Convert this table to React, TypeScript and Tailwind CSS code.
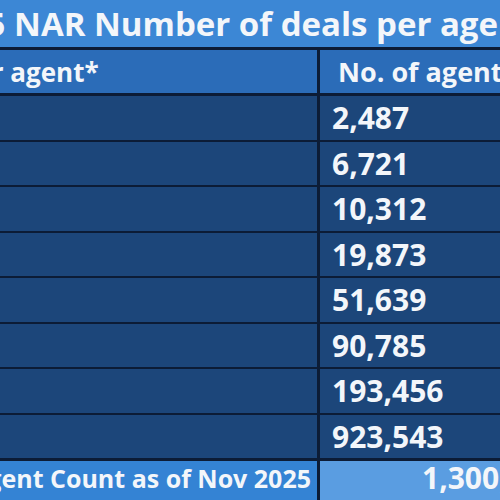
import React from "react";

const ROWS = ["2,487", "6,721", "10,312", "19,873", "51,639", "90,785", "193,456", "923,543"];

export default function App() {
  return (
    <div
      className="h-[500px] w-[500px] overflow-hidden bg-[#0c1c36] leading-none text-[#f3f6fa]"
      style={{ fontFamily: '"Open Sans", "Noto Sans", sans-serif' }}
    >
      <div className="ml-[-160px] flex w-[760px] flex-col">
        {/* title */}
        <div className="flex h-[47px] items-center bg-[#3c87d5] pl-[90px] text-[33px] leading-none font-bold whitespace-nowrap">
          2025 NAR Number of deals per agent
        </div>

        {/* header */}
        <div className="mt-[3px] grid h-[43px] grid-cols-[477px_1fr] grid-rows-[43px] gap-x-[3px]">
          <div className="flex items-center bg-[#2b6cb8] pl-[42px] text-[26px] leading-none font-bold whitespace-nowrap">
            Deals per agent*
          </div>
          <div className="flex items-center bg-[#2b6cb8] pl-[18px] text-[27px] leading-none font-bold whitespace-nowrap">
            No. of agents
          </div>
        </div>

        {/* rows */}
        <div className="mt-[3px] flex flex-col gap-y-[2px]">
          {ROWS.map((n, i) => (
            <div
              key={n}
              className={
                i % 2 === 0
                  ? "grid h-[44px] grid-cols-[477px_1fr] grid-rows-[44px] gap-x-[3px]"
                  : "grid h-[43px] grid-cols-[477px_1fr] grid-rows-[43px] gap-x-[3px]"
              }
            >
              <div className="bg-[#1c467a]" />
              <div className="flex items-center bg-[#1c467a] pl-[12px] text-[30px] leading-none font-bold">
                {n}
              </div>
            </div>
          ))}
        </div>

        {/* footer */}
        <div className="mt-[3px] grid h-[44px] grid-cols-[477px_1fr] grid-rows-[44px] gap-x-[3px]">
          <div className="flex items-center justify-end bg-[#3483d4] pr-[6px] pb-[10px] text-[25px] leading-none font-bold whitespace-nowrap">
            Total Agent Count as of Nov 2025
          </div>
          <div className="flex items-center bg-[#5a9de1] pl-[102px] pb-[10px] text-[30px] leading-none font-bold whitespace-nowrap">
            1,300,000
          </div>
        </div>
      </div>
    </div>
  );
}
